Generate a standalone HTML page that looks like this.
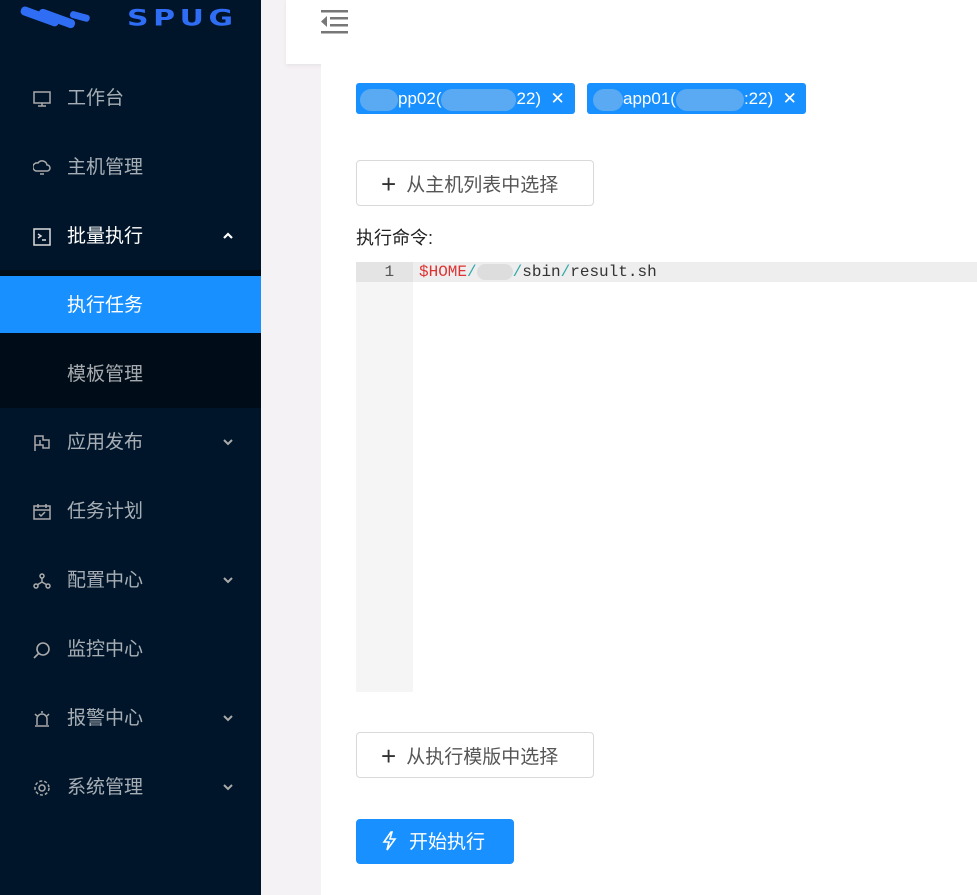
<!DOCTYPE html>
<html><head><meta charset="utf-8"><style>
*{margin:0;padding:0;box-sizing:border-box}
body{width:977px;height:895px;overflow:hidden;background:#f5f2f5;font-family:"Liberation Sans","Noto Sans CJK SC",sans-serif;position:relative}
.side{position:absolute;left:0;top:0;width:261px;height:895px;background:#001529}
.logo{position:absolute;left:20px;top:4px}
.spug{position:absolute;left:127px;top:6px;color:#2f6df5;font:bold 26px "DejaVu Sans",sans-serif;letter-spacing:4px;transform:scale(1.15,.85);transform-origin:left top}
.item{position:absolute;left:0;width:261px;height:46px;color:rgba(255,255,255,.65);font-size:19px;line-height:48px}
.item .ic{position:absolute;left:33px;top:15px;width:18px;height:18px}
.item .t{position:absolute;left:67px}
.item .ar{position:absolute;left:222px;top:19px;width:12px;height:8px}
.sub{position:absolute;left:0;top:270px;width:261px;height:138px;background:#000c17}
.sel{position:absolute;left:0;top:276px;width:261px;height:57px;background:#1890ff}
.hdr{position:absolute;left:286px;top:0;width:691px;height:64px;background:#fff;box-shadow:0 2px 4px rgba(0,0,0,.06)}
.card{position:absolute;left:321px;top:64px;width:656px;height:831px;background:#fff}
.tag{position:absolute;top:83px;height:31px;background:#1890ff;border-radius:3px;color:#fff;font-size:17px;line-height:31px;padding-left:8px}
.blur{display:inline-block;background:#5aaaf3;border-radius:12px;height:22px;vertical-align:middle}
.btn{position:absolute;left:356px;height:46px;border:1px solid #d9d9d9;border-radius:4px;background:#fff;color:#555;font-size:19px;line-height:46px;width:238px;padding-left:24px}
.btn b{font-weight:normal;font-size:26px;color:#333;margin-right:10px;vertical-align:-2px}
.ed{position:absolute;left:356px;top:262px;width:621px;height:430px}
.gut{position:absolute;left:0;top:0;width:57px;height:430px;background:#f5f5f5}
.line{position:absolute;left:0;top:0;width:621px;height:20px;background:#eeeeee}
.code{position:absolute;left:63px;top:0;font:16px/20px "Liberation Mono",monospace;color:#333}
</style></head><body>
<div class="side">
<svg class="logo" width="75" height="36" viewBox="0 0 75 36"><g fill="#2f6df5"><rect x="0" y="8" width="40" height="9" rx="4" transform="rotate(20 20 12)"/><rect x="18" y="10" width="38" height="9" rx="4" transform="rotate(20 37 14)"/><rect x="50" y="9" width="20" height="7" rx="3" transform="rotate(15 60 12)"/></g></svg>
<div class="spug">SPUG</div>
<div class="sub"></div><div class="sel"></div>
<div class="item" style="top:75px"><svg class="ic" viewBox="0 0 18 18" fill="none" stroke="#aaa" stroke-width="1.5"><rect x="1" y="2" width="16" height="11"/><path d="M9 13v3M5 16h8"/></svg><span class="t">工作台</span></div>
<div class="item" style="top:144px"><svg class="ic" viewBox="0 0 18 18" fill="none" stroke="#aaa" stroke-width="1.5"><path d="M3 12a4 4 0 0 1 2-8 5 5 0 0 1 9 2 3 3 0 0 1 0 6z"/><path d="M7 15h4"/></svg><span class="t">主机管理</span></div>
<div class="item" style="top:213px;color:#fff"><svg class="ic" viewBox="0 0 18 18" fill="none" stroke="#ddd" stroke-width="1.5"><rect x="1" y="1" width="16" height="16"/><path d="M5 6l3 2-3 2M9 12h4"/></svg><span class="t">批量执行</span><svg class="ar" viewBox="0 0 12 8" fill="none" stroke="#fff" stroke-width="2.2"><path d="M2 6l4-4 4 4"/></svg></div>
<div class="item" style="top:282px;color:#fff"><span class="t">执行任务</span></div>
<div class="item" style="top:351px"><span class="t">模板管理</span></div>
<div class="item" style="top:419px"><svg class="ic" viewBox="0 0 18 18" fill="none" stroke="#aaa" stroke-width="1.5"><path d="M2 17V2h8v4h6v8h-6v-3H2M7 6v5"/></svg><span class="t">应用发布</span><svg class="ar" viewBox="0 0 12 8" fill="none" stroke="#aaa" stroke-width="2"><path d="M2 2l4 4 4-4"/></svg></div>
<div class="item" style="top:488px"><svg class="ic" viewBox="0 0 18 18" fill="none" stroke="#aaa" stroke-width="1.5"><rect x="1" y="3" width="16" height="13"/><path d="M5 1v4M13 1v4M1 7h16M6 11l2 2 4-4"/></svg><span class="t">任务计划</span></div>
<div class="item" style="top:557px"><svg class="ic" viewBox="0 0 18 18" fill="none" stroke="#aaa" stroke-width="1.5"><circle cx="9" cy="4" r="2"/><circle cx="3" cy="14" r="2"/><circle cx="15" cy="14" r="2"/><path d="M9 6v4l-5 3M9 10l5 3"/></svg><span class="t">配置中心</span><svg class="ar" viewBox="0 0 12 8" fill="none" stroke="#aaa" stroke-width="2"><path d="M2 2l4 4 4-4"/></svg></div>
<div class="item" style="top:626px"><svg class="ic" viewBox="0 0 18 18" fill="none" stroke="#aaa" stroke-width="1.6"><circle cx="10" cy="8" r="6"/><path d="M6 12l-5 5"/></svg><span class="t">监控中心</span></div>
<div class="item" style="top:695px"><svg class="ic" viewBox="0 0 18 18" fill="none" stroke="#aaa" stroke-width="1.5"><path d="M4 15V9a5 5 0 0 1 10 0v6M2 16h14M9 1v2M2 4l2 2M16 4l-2 2"/></svg><span class="t">报警中心</span><svg class="ar" viewBox="0 0 12 8" fill="none" stroke="#aaa" stroke-width="2"><path d="M2 2l4 4 4-4"/></svg></div>
<div class="item" style="top:764px"><svg class="ic" viewBox="0 0 18 18" fill="none" stroke="#aaa" stroke-width="1.5"><circle cx="9" cy="9" r="3"/><circle cx="9" cy="9" r="7" stroke-dasharray="3 2"/></svg><span class="t">系统管理</span><svg class="ar" viewBox="0 0 12 8" fill="none" stroke="#aaa" stroke-width="2"><path d="M2 2l4 4 4-4"/></svg></div>
</div>
<div class="hdr"><svg style="position:absolute;left:35px;top:10px" width="27" height="24" viewBox="0 0 27 24" fill="#777"><rect x="0" y="0" width="27" height="2.5"/><rect x="9" y="7" width="18" height="2.5"/><rect x="9" y="14" width="18" height="2.5"/><rect x="0" y="21" width="27" height="2.5"/><path d="M6 6v11l-6-5.5z"/></svg></div>
<div class="card"></div>
<div class="tag" style="left:356px;width:219px"><span class="blur" style="width:38px;margin-left:-4px"></span>pp02(<span class="blur" style="width:75px"></span>22) &nbsp;✕</div>
<div class="tag" style="left:587px;width:219px"><span class="blur" style="width:30px;margin-left:-2px"></span>app01(<span class="blur" style="width:68px"></span>:22) &nbsp;✕</div>
<div class="btn" style="top:160px"><b>+</b>从主机列表中选择</div>
<div style="position:absolute;left:356px;top:224px;font-size:18px;color:#222">执行命令:</div>
<div class="ed"><div class="gut"></div><div class="line"></div><div style="position:absolute;left:0;top:0;width:57px;height:20px;background:#e4e4e4;text-align:center;font:16px/20px 'Liberation Mono',monospace;color:#555">&nbsp;1</div>
<div class="code"><span style="color:#d33">$HOME</span><span style="color:#3aa">/</span><span class="blur" style="width:36px;height:16px;background:#ddd"></span><span style="color:#3aa">/</span>sbin<span style="color:#3aa">/</span>result.sh</div></div>
<div class="btn" style="top:732px"><b>+</b>从执行模版中选择</div>
<div style="position:absolute;left:356px;top:819px;width:158px;height:45px;background:#1890ff;border-radius:4px;color:#fff;font-size:19px;line-height:47px;padding-left:25px"><svg width="16" height="20" viewBox="0 0 16 20" style="vertical-align:-3px;margin-right:12px" fill="none" stroke="#fff" stroke-width="1.6"><path d="M10 1L3 11h5l-2 8 8-11H9l2-7z"/></svg>开始执行</div>
</body></html>
